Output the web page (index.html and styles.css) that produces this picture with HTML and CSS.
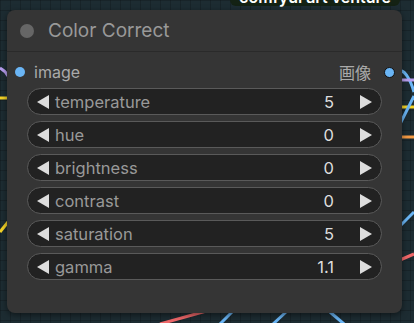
FILE: index.html
```html
<!DOCTYPE html>
<html>

<head>
    <title>Color Correct</title>
    <link rel="stylesheet" href="styles.css">
</head>

<body>
    <!-- 画布上的连线，节点盖在上面 -->
    <svg class="wires" width="414" height="323" viewBox="0 0 414 323">
        <path d="M0 68 C4 70 6 72 8 76" stroke="#b89ef0" />
        <path d="M0 98 L8 98" stroke="#f5d327" />
        <path d="M0 232 L8 222" stroke="#f5d327" />
        <path d="M400 70 C406 72 410 78 414 92" stroke="#6ab5f5" />
        <path d="M400 80 L414 80" stroke="#b89ef0" />
        <path d="M400 107 L414 107" stroke="#f5d327" />
        <path d="M400 137 L414 137" stroke="#f59b45" />
        <path d="M400 124 L414 96" stroke="#6ab5f5" />
        <path d="M400 226 L414 212" stroke="#6ab5f5" />
        <path d="M400 260 L414 254" stroke="#f0686a" />
        <path d="M160 324 L210 310" stroke="#f0686a" />
        <path d="M220 324 L232 312" stroke="#6ab5f5" />
        <path d="M273 324 L286 312" stroke="#6ab5f5" />
        <path d="M330 312 L344 324" stroke="#6ab5f5" />
    </svg>

    <div class="tip">comfyui art venture</div>

    <div class="node">
        <div class="node-title">
            <span class="title-dot"></span>
            <span class="title-text">Color Correct</span>
        </div>
        <div class="node-body">
            <div class="slots">
                <span class="slot"><span class="slot-dot"></span>image</span>
                <span class="slot">画像<span class="slot-dot out"></span></span>
            </div>
            <div class="widget">
                <svg class="arr" width="12" height="14" viewBox="0 0 12 14"><polygon points="12,0 12,14 0,7" /></svg>
                <span class="w-label">temperature</span>
                <span class="w-value">5</span>
                <svg class="arr" width="12" height="14" viewBox="0 0 12 14"><polygon points="0,0 0,14 12,7" /></svg>
            </div>
            <div class="widget">
                <svg class="arr" width="12" height="14" viewBox="0 0 12 14"><polygon points="12,0 12,14 0,7" /></svg>
                <span class="w-label">hue</span>
                <span class="w-value">0</span>
                <svg class="arr" width="12" height="14" viewBox="0 0 12 14"><polygon points="0,0 0,14 12,7" /></svg>
            </div>
            <div class="widget">
                <svg class="arr" width="12" height="14" viewBox="0 0 12 14"><polygon points="12,0 12,14 0,7" /></svg>
                <span class="w-label">brightness</span>
                <span class="w-value">0</span>
                <svg class="arr" width="12" height="14" viewBox="0 0 12 14"><polygon points="0,0 0,14 12,7" /></svg>
            </div>
            <div class="widget">
                <svg class="arr" width="12" height="14" viewBox="0 0 12 14"><polygon points="12,0 12,14 0,7" /></svg>
                <span class="w-label">contrast</span>
                <span class="w-value">0</span>
                <svg class="arr" width="12" height="14" viewBox="0 0 12 14"><polygon points="0,0 0,14 12,7" /></svg>
            </div>
            <div class="widget">
                <svg class="arr" width="12" height="14" viewBox="0 0 12 14"><polygon points="12,0 12,14 0,7" /></svg>
                <span class="w-label">saturation</span>
                <span class="w-value">5</span>
                <svg class="arr" width="12" height="14" viewBox="0 0 12 14"><polygon points="0,0 0,14 12,7" /></svg>
            </div>
            <div class="widget">
                <svg class="arr" width="12" height="14" viewBox="0 0 12 14"><polygon points="12,0 12,14 0,7" /></svg>
                <span class="w-label">gamma</span>
                <span class="w-value">1.1</span>
                <svg class="arr" width="12" height="14" viewBox="0 0 12 14"><polygon points="0,0 0,14 12,7" /></svg>
            </div>
        </div>
    </div>
</body>

</html>
```

FILE: styles.css
```css
html,
body {
    height: 100%;
    padding: 0;
    margin: 0;
}

body {
    position: relative;
    overflow: hidden;
    background-color: #1d2c32;
    background-image:
        linear-gradient(rgba(0, 0, 0, 0.18) 1px, transparent 1px),
        linear-gradient(90deg, rgba(0, 0, 0, 0.18) 1px, transparent 1px);
    background-size: 10px 10px;
    font-family: Inter, "Liberation Sans", "Noto Sans CJK JP", sans-serif;
    padding-top: 10px;
    box-sizing: border-box;
}

/*连线画在最底层*/
.wires {
    position: absolute;
    left: 0;
    top: 0;
}

.wires path {
    fill: none;
    stroke-width: 3;
}

.tip {
    position: absolute;
    left: 230px;
    top: -12px;
    width: 170px;
    height: 18px;
    border-radius: 6px;
    background-color: #142214;
    color: #fff;
    font-size: 16px;
    font-weight: 600;
    line-height: 18px;
    text-align: center;
}

.node {
    position: relative;
    width: 395px;
    height: 303px;
    margin-left: 7px;
    border-radius: 8px;
    background-color: #353535;
    box-shadow: 0 2px 6px rgba(0, 0, 0, 0.5);
}

.node-title {
    display: flex;
    align-items: center;
    height: 41px;
    padding-left: 13px;
    border-bottom: 1px solid #2a2a2a;
}

.title-dot {
    width: 14px;
    height: 14px;
    border-radius: 50%;
    background-color: #666;
}

.title-text {
    margin-left: 14px;
    font-size: 19px;
    color: #999;
}

.node-body {
    display: flex;
    flex-direction: column;
    gap: 6px;
    padding: 10px 20px 0 20px;
}

.slots {
    display: flex;
    justify-content: space-between;
    align-items: center;
    height: 20px;
    margin: 0 -13px 0 -12px;
    font-size: 16px;
    color: #aaa;
}

.slot {
    display: flex;
    align-items: center;
    gap: 9px;
}

.slot-dot {
    width: 10px;
    height: 10px;
    border-radius: 50%;
    background-color: #6ab5f5;
}

.slot-dot.out {
    width: 9px;
    height: 9px;
    border: 1px solid #111;
    margin-left: 4px;
}

.widget {
    display: flex;
    align-items: center;
    height: 25px;
    padding: 0 9px;
    border: 1px solid #5a5a5a;
    border-radius: 14px;
    background-color: #222;
    font-size: 16.5px;
}

.arr {
    fill: #ddd;
}

.w-label {
    flex: 1;
    margin-left: 6px;
    color: #999;
}

.w-value {
    margin-right: 26px;
    color: #ddd;
}
```
